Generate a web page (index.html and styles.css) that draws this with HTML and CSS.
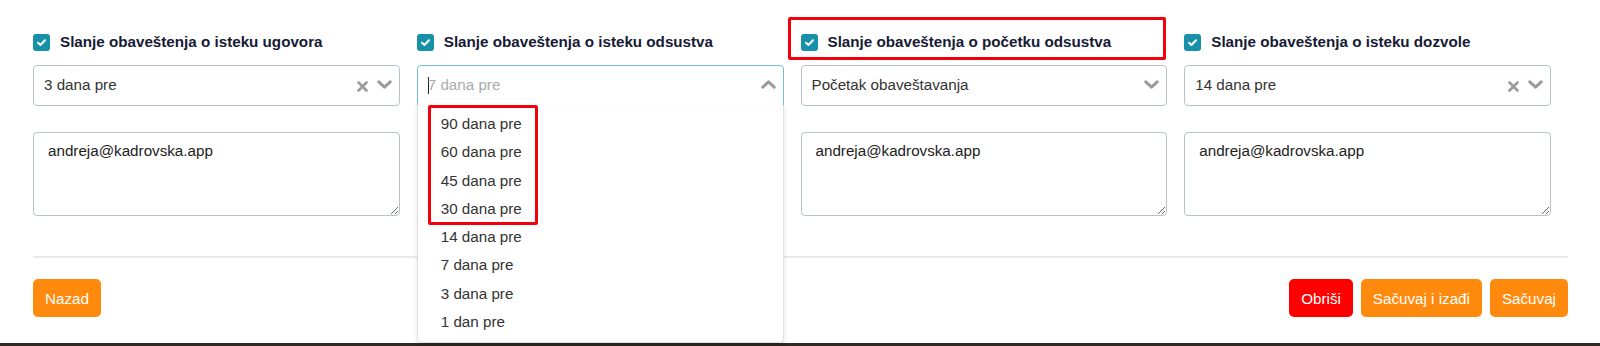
FILE: index.html
```html
<!DOCTYPE html>
<html lang="sr">
<head>
<meta charset="utf-8">
<title>Obaveštenja</title>
<link rel="stylesheet" href="styles.css">
</head>
<body>
<div class="page">
  <div class="grid">
    <div class="field">
      <div class="label-row">
        <span class="check"><svg viewBox="0 0 17 17" width="17" height="17"><path d="M5 8.8 L7.4 11 L12 6.2" fill="none" stroke="#fff" stroke-width="2" stroke-linecap="round" stroke-linejoin="round"/></svg></span>
        <span class="label">Slanje obaveštenja o isteku ugovora</span>
      </div>
      <div class="select">
        <span class="value">3 dana pre</span>
        <span class="icons">
          <svg class="clear" viewBox="0 0 11 11" width="11" height="11"><path d="M1.5 1.5 L9.5 9.5 M9.5 1.5 L1.5 9.5" stroke="#9b9b9b" stroke-width="2.6" stroke-linecap="round"/></svg>
          <svg class="chev" viewBox="0 0 15 9" width="15" height="9"><path d="M1.8 1.8 L7.5 7.2 L13.2 1.8" fill="none" stroke="#9b9b9b" stroke-width="3" stroke-linecap="round" stroke-linejoin="round"/></svg>
        </span>
      </div>
      <textarea class="emails">andreja@kadrovska.app</textarea>
    </div>

    <div class="field">
      <div class="label-row">
        <span class="check"><svg viewBox="0 0 17 17" width="17" height="17"><path d="M5 8.8 L7.4 11 L12 6.2" fill="none" stroke="#fff" stroke-width="2" stroke-linecap="round" stroke-linejoin="round"/></svg></span>
        <span class="label">Slanje obaveštenja o isteku odsustva</span>
      </div>
      <div class="select focused">
        <span class="value placeholder"><span class="caret"></span>7 dana pre</span>
        <span class="icons">
          <svg class="chev" viewBox="0 0 15 9" width="15" height="9"><path d="M1.8 7.2 L7.5 1.8 L13.2 7.2" fill="none" stroke="#9b9b9b" stroke-width="3" stroke-linecap="round" stroke-linejoin="round"/></svg>
        </span>
        <ul class="menu">
          <li>90 dana pre</li>
          <li>60 dana pre</li>
          <li>45 dana pre</li>
          <li>30 dana pre</li>
          <li>14 dana pre</li>
          <li>7 dana pre</li>
          <li>3 dana pre</li>
          <li>1 dan pre</li>
          <span class="mark-items"></span>
        </ul>
      </div>
    </div>

    <div class="field">
      <div class="label-row">
        <span class="mark-label"></span>
        <span class="check"><svg viewBox="0 0 17 17" width="17" height="17"><path d="M5 8.8 L7.4 11 L12 6.2" fill="none" stroke="#fff" stroke-width="2" stroke-linecap="round" stroke-linejoin="round"/></svg></span>
        <span class="label">Slanje obaveštenja o početku odsustva</span>
      </div>
      <div class="select">
        <span class="value">Početak obaveštavanja</span>
        <span class="icons">
          <svg class="chev" viewBox="0 0 15 9" width="15" height="9"><path d="M1.8 1.8 L7.5 7.2 L13.2 1.8" fill="none" stroke="#9b9b9b" stroke-width="3" stroke-linecap="round" stroke-linejoin="round"/></svg>
        </span>
      </div>
      <textarea class="emails">andreja@kadrovska.app</textarea>
    </div>

    <div class="field">
      <div class="label-row">
        <span class="check"><svg viewBox="0 0 17 17" width="17" height="17"><path d="M5 8.8 L7.4 11 L12 6.2" fill="none" stroke="#fff" stroke-width="2" stroke-linecap="round" stroke-linejoin="round"/></svg></span>
        <span class="label">Slanje obaveštenja o isteku dozvole</span>
      </div>
      <div class="select">
        <span class="value">14 dana pre</span>
        <span class="icons">
          <svg class="clear" viewBox="0 0 11 11" width="11" height="11"><path d="M1.5 1.5 L9.5 9.5 M9.5 1.5 L1.5 9.5" stroke="#9b9b9b" stroke-width="2.6" stroke-linecap="round"/></svg>
          <svg class="chev" viewBox="0 0 15 9" width="15" height="9"><path d="M1.8 1.8 L7.5 7.2 L13.2 1.8" fill="none" stroke="#9b9b9b" stroke-width="3" stroke-linecap="round" stroke-linejoin="round"/></svg>
        </span>
      </div>
      <textarea class="emails">andreja@kadrovska.app</textarea>
    </div>
  </div>

  <hr class="sep">

  <div class="actions">
    <button class="btn orange">Nazad</button>
    <div class="right">
      <button class="btn red">Obriši</button>
      <button class="btn orange">Sačuvaj i izađi</button>
      <button class="btn orange">Sačuvaj</button>
    </div>
  </div>
</div>
<div class="footer"></div>
</body>
</html>
```

FILE: styles.css
```css
* { box-sizing: border-box; }
html, body { margin: 0; padding: 0; background: #fff; }
body {
  font-family: "Liberation Sans", Arial, sans-serif;
  font-size: 15.2px;
  color: #333;
  width: 1600px;
  height: 346px;
  overflow: hidden;
}
.page {
  height: 343px;
  padding: 34px 32px 0 33px;
}
.grid {
  display: grid;
  grid-template-columns: repeat(4, 1fr);
}
.field {
  margin-right: 17px;
  display: flex;
  flex-direction: column;
}
.label-row {
  position: relative;
  display: flex;
  align-items: center;
  height: 17px;
  gap: 10px;
}
.check {
  width: 17px;
  height: 17px;
  border-radius: 3px;
  background: #1691a9;
  display: flex;
}
.label {
  font-weight: bold;
  font-size: 15.2px;
  color: #161a35;
  line-height: 17px;
  position: relative;
  top: -1px;
}
.mark-label {
  position: absolute;
  left: -13px;
  top: -17px;
  width: 378px;
  height: 43px;
  border: 3px solid #f2000c;
  border-radius: 2px;
}
.select {
  position: relative;
  margin-top: 14px;
  height: 41px;
  border: 1px solid #b9c1cc;
  border-radius: 4px;
  display: flex;
  align-items: center;
  padding: 0 7px 0 10px;
}
.select .value {
  flex: 1;
  line-height: 18px;
  color: #333;
  position: relative;
  top: -1px;
}
.select.focused {
  border-color: #6cc2d3;
  border-bottom-left-radius: 0;
  border-bottom-right-radius: 0;
}
.placeholder {
  color: #ababab !important;
}
.caret {
  display: inline-block;
  width: 1px;
  height: 17px;
  background: #222;
  vertical-align: -4px;
  margin-right: -1px;
}
.icons {
  display: flex;
  align-items: center;
  gap: 9px;
}
.clear { position: relative; top: 1px; }
.chev { position: relative; top: -1px; }
.menu {
  position: absolute;
  left: -1px;
  right: -1px;
  top: 39px;
  margin: 0;
  padding: 5px 0 6px;
  list-style: none;
  background: #fff;
  border: 1px solid #e2e2e2;
  border-top: none;
  border-radius: 0 0 5px 5px;
  box-shadow: 0 2px 4px rgba(0,0,0,0.12);
  z-index: 5;
}
.menu li {
  height: 28.3px;
  line-height: 28.3px;
  padding-left: 23px;
  color: #333;
}
.mark-items {
  position: absolute;
  left: 10px;
  top: 0px;
  width: 110px;
  height: 120px;
  border: 3px solid #f2000c;
  border-radius: 2px;
}
.emails {
  display: block;
  margin-top: 26px;
  height: 84px;
  width: 100%;
  border: 1px solid #b9c1cc;
  border-radius: 4px;
  padding: 9px 14px;
  font-family: "Liberation Sans", Arial, sans-serif;
  font-size: 15.2px;
  line-height: 18px;
  color: #222;
  resize: vertical;
  outline: none;
}
.sep {
  margin: 40px 0 0;
  border: 0;
  height: 2px;
  background: #e9eaef;
}
.actions {
  margin-top: 21px;
  display: flex;
  justify-content: space-between;
}
.right {
  display: flex;
  gap: 8px;
}
.btn {
  height: 38px;
  border: 0;
  border-radius: 5px;
  padding: 0 12px;
  font-family: "Liberation Sans", Arial, sans-serif;
  font-size: 15.2px;
  color: #fff;
  cursor: pointer;
}
.btn.orange { background: #ff8a0d; }
.btn.red { background: #fe0000; }
.footer {
  height: 3px;
  background: #2e2722;
}
```
